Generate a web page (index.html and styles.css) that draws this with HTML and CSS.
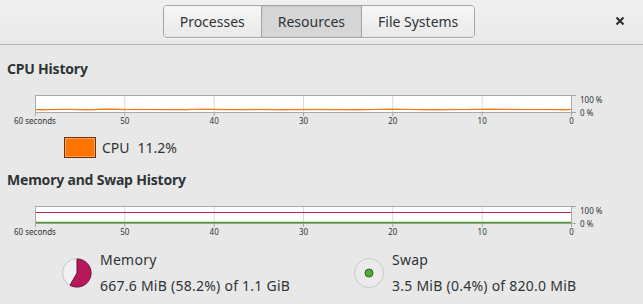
FILE: index.html
```html
<!DOCTYPE html>
<html lang="en">
<head>
    <meta charset="UTF-8">
    <title>System Monitor</title>
    <link rel="stylesheet" href="styles.css">
</head>
<body>
    <header class="headerbar">
        <div></div>
        <nav class="tabs">
            <button class="tab">Processes</button>
            <button class="tab active">Resources</button>
            <button class="tab">File Systems</button>
        </nav>
        <div class="header-end">
            <button class="close-btn" aria-label="Close">
                <svg width="10" height="10" viewBox="0 0 10 10"><path d="M1.5 1.5 L8.5 8.5 M8.5 1.5 L1.5 8.5" stroke="#2e3436" stroke-width="2.2"/></svg>
            </button>
        </div>
    </header>

    <main class="content">
        <!-- CPU -->
        <h2 class="section-title">CPU History</h2>
        <svg class="graph" width="643" height="36" viewBox="0 0 643 36">
            <rect x="35.5" y="5.5" width="536" height="17" fill="#fff" stroke="#a9a9a9"/>
            <g stroke="#d9d9d9">
                <line x1="124.8" y1="6" x2="124.8" y2="22"/>
                <line x1="214.2" y1="6" x2="214.2" y2="22"/>
                <line x1="303.5" y1="6" x2="303.5" y2="22"/>
                <line x1="392.8" y1="6" x2="392.8" y2="22"/>
                <line x1="482.2" y1="6" x2="482.2" y2="22"/>
            </g>
            <g stroke="#a9a9a9">
                <line x1="35.5" y1="22" x2="35.5" y2="26"/>
                <line x1="124.8" y1="22" x2="124.8" y2="26"/>
                <line x1="214.2" y1="22" x2="214.2" y2="26"/>
                <line x1="303.5" y1="22" x2="303.5" y2="26"/>
                <line x1="392.8" y1="22" x2="392.8" y2="26"/>
                <line x1="482.2" y1="22" x2="482.2" y2="26"/>
                <line x1="571.5" y1="22" x2="571.5" y2="26"/>
                <line x1="571" y1="5.5" x2="576" y2="5.5"/>
                <line x1="571" y1="22.5" x2="576" y2="22.5"/>
            </g>
            <path d="M36 19.8 C50 20.5 58 18.6 72 19.4 S90 20.6 100 19.1 S118 19.9 130 19.6 S170 20.3 190 19.5 S205 18.7 215 19.3 S240 19.8 260 19.5 S275 20.6 290 19.8 S320 19.6 340 19.7 S355 20.6 370 19.6 S400 18.8 410 19.4 S430 20.5 445 19.7 S460 20.4 475 19.2 S510 19.8 540 19.6 S560 20.9 571 19.3" fill="none" stroke="#fbb27a" stroke-width="1.4"/>
            <line x1="36" y1="19.5" x2="571" y2="19.5" stroke="#f07a1a" stroke-width="1"/>
            <g class="axis-label">
                <text x="14" y="33.5">60 seconds</text>
                <text x="124.8" y="33.5" text-anchor="middle">50</text>
                <text x="214.2" y="33.5" text-anchor="middle">40</text>
                <text x="303.5" y="33.5" text-anchor="middle">30</text>
                <text x="392.8" y="33.5" text-anchor="middle">20</text>
                <text x="482.2" y="33.5" text-anchor="middle">10</text>
                <text x="571.5" y="33.5" text-anchor="middle">0</text>
                <text x="580" y="13">100 %</text>
                <text x="580" y="25.5">0 %</text>
            </g>
        </svg>
        <div class="cpu-legend">
            <span class="swatch"></span>
            <span class="legend-name">CPU</span>
            <span class="legend-value">11.2%</span>
        </div>

        <!-- Memory and swap -->
        <h2 class="section-title mem-title">Memory and Swap History</h2>
        <svg class="graph" width="643" height="36" viewBox="0 0 643 36">
            <rect x="35.5" y="5.5" width="536" height="17" fill="#fff" stroke="#a9a9a9"/>
            <g stroke="#d9d9d9">
                <line x1="124.8" y1="6" x2="124.8" y2="22"/>
                <line x1="214.2" y1="6" x2="214.2" y2="22"/>
                <line x1="303.5" y1="6" x2="303.5" y2="22"/>
                <line x1="392.8" y1="6" x2="392.8" y2="22"/>
                <line x1="482.2" y1="6" x2="482.2" y2="22"/>
            </g>
            <g stroke="#a9a9a9">
                <line x1="35.5" y1="22" x2="35.5" y2="26"/>
                <line x1="124.8" y1="22" x2="124.8" y2="26"/>
                <line x1="214.2" y1="22" x2="214.2" y2="26"/>
                <line x1="303.5" y1="22" x2="303.5" y2="26"/>
                <line x1="392.8" y1="22" x2="392.8" y2="26"/>
                <line x1="482.2" y1="22" x2="482.2" y2="26"/>
                <line x1="571.5" y1="22" x2="571.5" y2="26"/>
                <line x1="571" y1="5.5" x2="576" y2="5.5"/>
                <line x1="571" y1="22.5" x2="576" y2="22.5"/>
            </g>
            <line x1="36" y1="11.5" x2="571" y2="11.5" stroke="#b3245f" stroke-width="1.2"/>
            <line x1="36" y1="21.5" x2="571" y2="21.5" stroke="#4e9a32" stroke-width="1.4"/>
            <g class="axis-label">
                <text x="14" y="33.5">60 seconds</text>
                <text x="124.8" y="33.5" text-anchor="middle">50</text>
                <text x="214.2" y="33.5" text-anchor="middle">40</text>
                <text x="303.5" y="33.5" text-anchor="middle">30</text>
                <text x="392.8" y="33.5" text-anchor="middle">20</text>
                <text x="482.2" y="33.5" text-anchor="middle">10</text>
                <text x="571.5" y="33.5" text-anchor="middle">0</text>
                <text x="580" y="13">100 %</text>
                <text x="580" y="25.5">0 %</text>
            </g>
        </svg>

        <div class="mem-legend">
            <div class="mem-item">
                <svg class="pie" width="32" height="32" viewBox="0 0 32 32">
                    <circle cx="16" cy="16" r="14.5" fill="#f1f1f1" stroke="#c4c4c4"/>
                    <path d="M16 16 L16 2 A14 14 0 1 1 9.05 28.15 Z" fill="#b8175b" stroke="#6e0f37" stroke-width="1" stroke-linejoin="round"/>
                </svg>
                <div class="mem-text">
                    <div>Memory</div>
                    <div>667.6 MiB (58.2%) of 1.1 GiB</div>
                </div>
            </div>
            <div class="mem-item">
                <svg class="pie" width="32" height="32" viewBox="0 0 32 32">
                    <circle cx="16" cy="16" r="14.5" fill="#ebebeb" stroke="#c8c8c8"/>
                    <circle cx="16" cy="16" r="4" fill="#4cae35" stroke="#2b6a1c"/>
                </svg>
                <div class="mem-text">
                    <div>Swap</div>
                    <div>3.5 MiB (0.4%) of 820.0 MiB</div>
                </div>
            </div>
        </div>
    </main>
</body>
</html>
```

FILE: styles.css
```css
* {
    box-sizing: border-box;
    margin: 0;
    padding: 0;
}

body {
    background: #e8e8e8;
    color: #2e3436;
    font-family: 'Noto Sans', sans-serif;
    font-size: 14px;
    overflow: hidden;
}

.headerbar {
    height: 45px;
    display: grid;
    grid-template-columns: 1fr auto 1fr;
    align-items: center;
    background: linear-gradient(#f0f0f0, #e9e9e9);
    border-bottom: 1px solid #b4b4b4;
}

.tabs {
    display: flex;
    margin-left: -5px;
    margin-top: -1px;
    border: 1px solid #a4a4a4;
    border-radius: 4px;
    overflow: hidden;
    box-shadow: 0 1px 0 rgba(255,255,255,0.6);
}

.tab {
    height: 31px;
    padding: 0 16px;
    background: linear-gradient(#f6f6f6, #e9e9e9);
    border: none;
    border-left: 1px solid #a4a4a4;
    font-family: 'Noto Sans', sans-serif;
    font-size: 14px;
    color: #2e3436;
}

.tab:first-child {
    border-left: none;
}

.tab.active {
    background: #d6d6d6;
    box-shadow: inset 0 1px 2px rgba(0,0,0,0.08);
}

.header-end {
    display: flex;
    justify-content: flex-end;
    padding-right: 13px;
}

.close-btn {
    width: 20px;
    height: 20px;
    display: flex;
    align-items: center;
    justify-content: center;
    background: none;
    border: none;
    margin-top: -2px;
}

.section-title {
    font-size: 14px;
    font-weight: 700;
    line-height: 18px;
    padding-left: 7px;
    margin-top: 15px;
    letter-spacing: -0.2px;
}

.mem-title {
    margin-top: 13px;
}

.graph {
    display: block;
    margin-top: 12px;
}

.axis-label text {
    font-family: 'Noto Sans', sans-serif;
    font-size: 8px;
    fill: #2e3436;
}

.cpu-legend {
    display: flex;
    align-items: center;
    margin-top: 11px;
    padding-left: 64px;
    height: 21px;
}

.swatch {
    width: 32px;
    height: 21px;
    background: #ff7400;
    border: 1px solid #6b3208;
    box-shadow: inset 0 0 0 1px #ffa35c;
    margin-right: 6px;
}

.legend-name {
    margin-right: 8px;
}

.mem-legend {
    display: grid;
    grid-template-columns: 292px auto;
    padding-left: 61px;
    margin-top: 10px;
}

.mem-item {
    display: flex;
    align-items: center;
    gap: 7px;
}

.pie {
    flex: none;
}

.mem-text {
    line-height: 26px;
    letter-spacing: 0.25px;
}
```
